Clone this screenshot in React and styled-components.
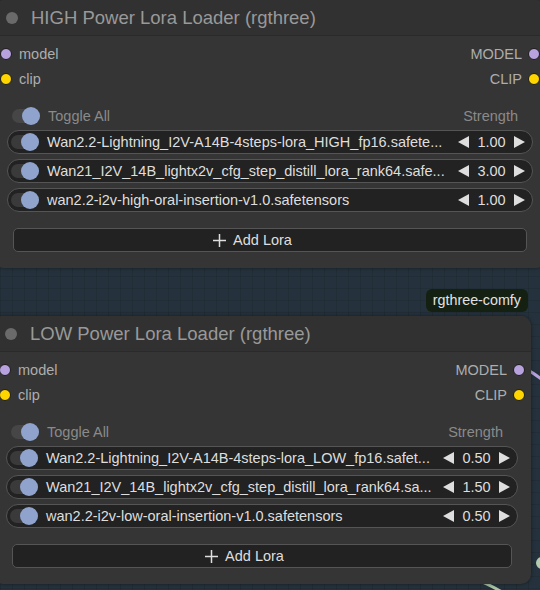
import React from "react";
import styled, { createGlobalStyle } from "styled-components";

const GlobalStyle = createGlobalStyle`
  html, body { margin: 0; padding: 0; width: 540px; height: 590px; overflow: hidden; background: #25323d; }
  body { font-family: "Liberation Sans", Arial, sans-serif; }
  * { box-sizing: border-box; }
`;

const Canvas = styled.div`
  position: relative;
  width: 540px;
  height: 590px;
  overflow: hidden;
  background-color: #25323d;
  background-image:
    linear-gradient(rgba(0, 0, 0, 0.1) 1px, transparent 1px),
    linear-gradient(90deg, rgba(0, 0, 0, 0.1) 1px, transparent 1px);
  background-size: 12px 12px;
`;

const Wires = styled.svg`
  position: absolute;
  left: 0;
  top: 0;
  width: 540px;
  height: 590px;
`;

const Node = styled.div`
  position: absolute;
  left: ${(p) => p.$x}px;
  top: ${(p) => p.$y}px;
  width: ${(p) => p.$w}px;
  background: #353535;
  border-radius: 10px;
  box-shadow: 0 0 4px rgba(0, 0, 0, 0.45);
  padding-bottom: 16px;
`;

const TitleBar = styled.div`
  height: 36px;
  display: flex;
  align-items: center;
  gap: 13px;
  padding-left: 12px;
  background: #313131;
  border-bottom: 1px solid #2a2a2a;
  border-radius: 10px 10px 0 0;
  color: #999;
  font-size: 18.5px;
  white-space: nowrap;
`;

const TitleDot = styled.span`
  width: 12px;
  height: 12px;
  border-radius: 50%;
  background: #6a6a6a;
  flex: none;
`;

const Badge = styled.div`
  position: absolute;
  top: -27px;
  right: 3px;
  height: 23px;
  line-height: 23px;
  padding: 0 7px;
  background: #142012;
  border-radius: 6px;
  color: #e2e2e2;
  font-size: 14.3px;
`;

const Slots = styled.div`
  padding-top: 5px;
`;

const SlotRow = styled.div`
  height: 25px;
  display: flex;
  align-items: center;
  justify-content: space-between;
  padding: 0 6px;
  color: #adadad;
  font-size: 14.5px;
`;

const Slot = styled.div`
  display: flex;
  align-items: center;
  gap: ${(p) => (p.$out ? 6 : 7)}px;
`;

const SlotDot = styled.span`
  width: 12px;
  height: 12px;
  border-radius: 50%;
  background: ${(p) => p.$color};
  border: 1px solid #1c1c1c;
  flex: none;
`;

const ToggleAllRow = styled.div`
  margin-top: 13px;
  height: 24px;
  display: flex;
  align-items: center;
  gap: 8px;
  padding: 0 28px 0 18px;
  color: #8a8a8a;
  font-size: 14.5px;
`;

const Strength = styled.span`
  margin-left: auto;
`;

const Track = styled.span`
  position: relative;
  width: 28px;
  height: 14px;
  border-radius: 7px;
  background: ${(p) => p.$bg};
  flex: none;
  display: flex;
  align-items: center;
  justify-content: flex-end;
`;

const Knob = styled.span`
  width: 18px;
  height: 18px;
  border-radius: 50%;
  background: #8fa3cd;
  flex: none;
`;

const LoraList = styled.div`
  margin-top: 2px;
  display: flex;
  flex-direction: column;
  gap: 5px;
  padding: 0 13px;
`;

const LoraRow = styled.div`
  height: 24px;
  display: flex;
  align-items: center;
  gap: 8px;
  padding: 0 7px 0 3px;
  background: #222;
  border: 1px solid #555;
  border-radius: 12px;
  color: #dedede;
  font-size: 14.5px;
`;

const LoraName = styled.span`
  flex: 1;
  min-width: 0;
  white-space: nowrap;
`;

const ValueGroup = styled.div`
  display: flex;
  align-items: center;
  gap: 8px;
  flex: none;
`;

const Value = styled.span`
  width: 29px;
  text-align: center;
`;

const AddButton = styled.div`
  margin: 16px 19px 0;
  height: 24px;
  display: flex;
  align-items: center;
  justify-content: center;
  gap: 6px;
  padding-right: 36px;
  background: #222;
  border: 1px solid #555;
  border-radius: 5px;
  color: #dedede;
  font-size: 14.5px;
`;

const Arrow = ({ dir }) => (
  <svg width="11" height="12" viewBox="0 0 11 12">
    <polygon points={dir === "left" ? "11,0 11,12 0,6" : "0,0 11,6 0,12"} fill="#dedede" />
  </svg>
);

const PlusIcon = () => (
  <svg width="15" height="15" viewBox="0 0 15 15">
    <path d="M7.5 1 V14 M1 7.5 H14" stroke="#dedede" strokeWidth="1.5" />
  </svg>
);

const LoraLoader = ({ x, y, w, title, loras, badge }) => (
  <Node $x={x} $y={y} $w={w}>
    {badge && <Badge>{badge}</Badge>}
    <TitleBar>
      <TitleDot />
      {title}
    </TitleBar>
    <Slots>
      <SlotRow>
        <Slot>
          <SlotDot $color="#b7a2de" />
          model
        </Slot>
        <Slot $out>
          MODEL
          <SlotDot $color="#b7a2de" />
        </Slot>
      </SlotRow>
      <SlotRow>
        <Slot>
          <SlotDot $color="#ffd500" />
          clip
        </Slot>
        <Slot $out>
          CLIP
          <SlotDot $color="#ffd500" />
        </Slot>
      </SlotRow>
    </Slots>
    <ToggleAllRow>
      <Track $bg="#464646">
        <Knob />
      </Track>
      Toggle All
      <Strength>Strength</Strength>
    </ToggleAllRow>
    <LoraList>
      {loras.map((l) => (
        <LoraRow key={l.name}>
          <Track $bg="#3a3a3a">
            <Knob />
          </Track>
          <LoraName>{l.name}</LoraName>
          <ValueGroup>
            <Arrow dir="left" />
            <Value>{l.value}</Value>
            <Arrow dir="right" />
          </ValueGroup>
        </LoraRow>
      ))}
    </LoraList>
    <AddButton>
      <PlusIcon />
      Add Lora
    </AddButton>
  </Node>
);

const highLoras = [
  { name: "Wan2.2-Lightning_I2V-A14B-4steps-lora_HIGH_fp16.safete...", value: "1.00" },
  { name: "Wan21_I2V_14B_lightx2v_cfg_step_distill_lora_rank64.safe...", value: "3.00" },
  { name: "wan2.2-i2v-high-oral-insertion-v1.0.safetensors", value: "1.00" },
];

const lowLoras = [
  { name: "Wan2.2-Lightning_I2V-A14B-4steps-lora_LOW_fp16.safet...", value: "0.50" },
  { name: "Wan21_I2V_14B_lightx2v_cfg_step_distill_lora_rank64.sa...", value: "1.50" },
  { name: "wan2.2-i2v-low-oral-insertion-v1.0.safetensors", value: "0.50" },
];

export default function App() {
  return (
    <>
      <GlobalStyle />
      <Canvas>
        <Wires viewBox="0 0 540 590">
          <path d="M520 369 C530 369 534 374 548 384" stroke="#b7a2de" strokeWidth="3" fill="none" />
          <path d="M462 574 C478 580 492 585 508 596" stroke="#a9c4a6" strokeWidth="3" fill="none" />
          <circle cx="542" cy="563" r="6" fill="#b3cbb0" />
        </Wires>
        <LoraLoader x={-6} y={0} w={552} title="HIGH Power Lora Loader (rgthree)" loras={highLoras} />
        <LoraLoader
          x={-7}
          y={316}
          w={538}
          title="LOW Power Lora Loader (rgthree)"
          loras={lowLoras}
          badge="rgthree-comfy"
        />
      </Canvas>
    </>
  );
}
